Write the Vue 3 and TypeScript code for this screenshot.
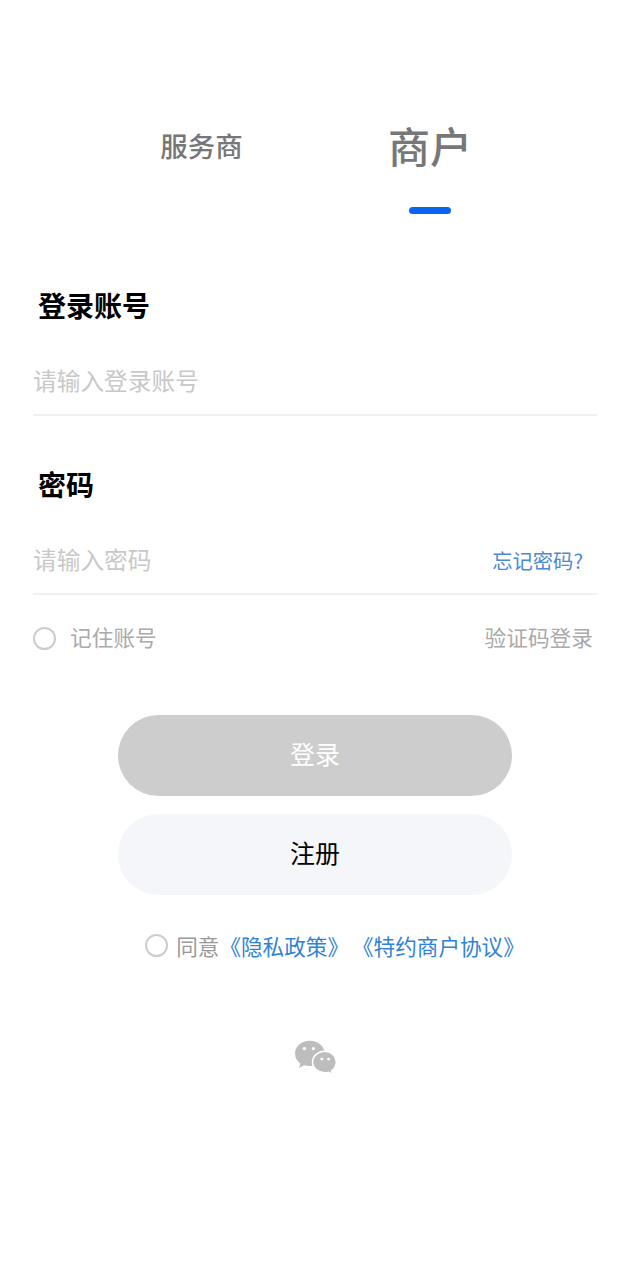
<script setup lang="ts">
import { ref } from "vue";

const activeTab = ref("merchant");
</script>

<template>
  <div class="page">
    <nav class="tabs">
      <div class="tab" :class="{ active: activeTab === 'provider' }">服务商</div>
      <div class="tab" :class="{ active: activeTab === 'merchant' }">商户</div>
    </nav>

    <section class="form">
      <h3 class="label">登录账号</h3>
      <div class="field">
        <span class="placeholder">请输入登录账号</span>
      </div>

      <h3 class="label label--second">密码</h3>
      <div class="field">
        <span class="placeholder">请输入密码</span>
        <a class="forgot">忘记密码?</a>
      </div>

      <div class="options">
        <div class="remember">
          <i class="radio"></i>
          <span>记住账号</span>
        </div>
        <span class="code-login">验证码登录</span>
      </div>
    </section>

    <div class="actions">
      <button class="btn btn--login">登录</button>
      <button class="btn btn--register">注册</button>
    </div>

    <div class="agree">
      <i class="radio"></i>
      <span class="agree__text">同意</span>
      <a class="agree__link">《隐私政策》</a>
      <a class="agree__link agree__link--two">《特约商户协议》</a>
    </div>

    <div class="wechat">
      <svg width="44" height="38" viewBox="0 0 42 36">
        <path fill="#bdbdbd" d="M15 2.500C7 2.500 1 8 1 14.800c0 3.800 1.900 7 5 9.300L4.800 28.500l4.900-2.600c1.700.5 3.400.8 5.300.8 8 0 14.500-5.300 14.500-11.900S23 2.500 15 2.500z" />
        <path fill="#bdbdbd" stroke="#fff" stroke-width="1.500" d="M29.500 12.500c-6.500 0-11.800 4.600-11.800 10.300s5.300 10.300 11.800 10.300c1.300 0 2.500-.2 3.700-.5l3.600 2-.9-3.400c2.700-1.900 4.500-4.900 4.500-8.400 0-5.700-4.900-10.300-10.900-10.300z" />
        <circle cx="10" cy="10" r="1.600" fill="#fff" />
        <circle cx="18.500" cy="10" r="1.600" fill="#fff" />
        <circle cx="26.500" cy="20" r="1.400" fill="#fff" />
        <circle cx="33" cy="20" r="1.400" fill="#fff" />
      </svg>
    </div>
  </div>
</template>

<style scoped>
.page {
  width: 630px;
  height: 1280px;
  box-sizing: border-box;
  padding-top: 118px;
  background: #fff;
  font-family: "Noto Sans CJK SC", "Noto Sans", sans-serif;
  overflow: hidden;
}

.tabs {
  display: grid;
  grid-template-columns: 230px 230px;
  justify-content: center;
  height: 100px;
}

.tab {
  position: relative;
  text-align: center;
  height: 58px;
  line-height: 54px;
  padding-left: 3px;
  font-size: 27.5px;
  font-weight: 500;
  color: #777;
}

.tab.active {
  padding-left: 0;
  font-size: 42px;
}

.tab.active::after {
  content: "";
  position: absolute;
  left: 50%;
  margin-left: -21px;
  top: 89px;
  width: 42px;
  height: 7px;
  border-radius: 4px;
  background: #0a66f0;
}

.form {
  padding: 0 33px;
}

.label {
  margin: 67px 0 0;
  padding-left: 5px;
  font-size: 28px;
  line-height: 40px;
  font-weight: 600;
  color: #000;
  height: 40px;
}

.label--second {
  margin-top: 48px;
}

.field {
  display: flex;
  align-items: center;
  justify-content: space-between;
  height: 91px;
  padding-top: 21px;
  border-bottom: 2px solid #f0f0f0;
  box-sizing: border-box;
}

.placeholder {
  font-size: 23.7px;
  color: #c8c8c8;
}

.forgot {
  margin-top: 2px;
  font-size: 20.3px;
  color: #4a8ad4;
  padding-right: 14px;
}

.options {
  display: flex;
  align-items: center;
  justify-content: space-between;
  height: 30px;
  margin-top: 26px;
  font-size: 21.7px;
  color: #aaa;
}

.remember {
  display: flex;
  align-items: center;
  gap: 14px;
}

.remember .radio {
  margin-top: 4px;
}

.code-login {
  padding-right: 4px;
}

.radio {
  display: block;
  width: 23px;
  height: 23px;
  box-sizing: border-box;
  border: 2px solid #ccc;
  border-radius: 50%;
}

.actions {
  display: flex;
  flex-direction: column;
  align-items: center;
  gap: 18px;
  margin-top: 64px;
}

.btn {
  width: 394px;
  height: 81px;
  padding: 0 0 6px;
  border: none;
  border-radius: 41px;
  font-family: inherit;
  font-size: 25px;
}

.btn--login {
  background: #cdcdcd;
  color: #fff;
}

.btn--register {
  background: #f4f6fa;
  color: #000;
}

.agree {
  display: flex;
  align-items: center;
  justify-content: center;
  margin-top: 33px;
  font-size: 21.6px;
  height: 34px;
  padding-left: 40px;
}

.agree .radio {
  margin-right: 8px;
}

.agree__text {
  color: #999;
}

.agree__link {
  color: #2f82d8;
  white-space: nowrap;
}

.agree__link--two {
  margin-left: 3px;
}

.wechat {
  display: flex;
  justify-content: center;
  padding-left: 2px;
  margin-top: 76px;
}
</style>

<style>
html,
body {
  margin: 0;
  background: #fff;
}
</style>
